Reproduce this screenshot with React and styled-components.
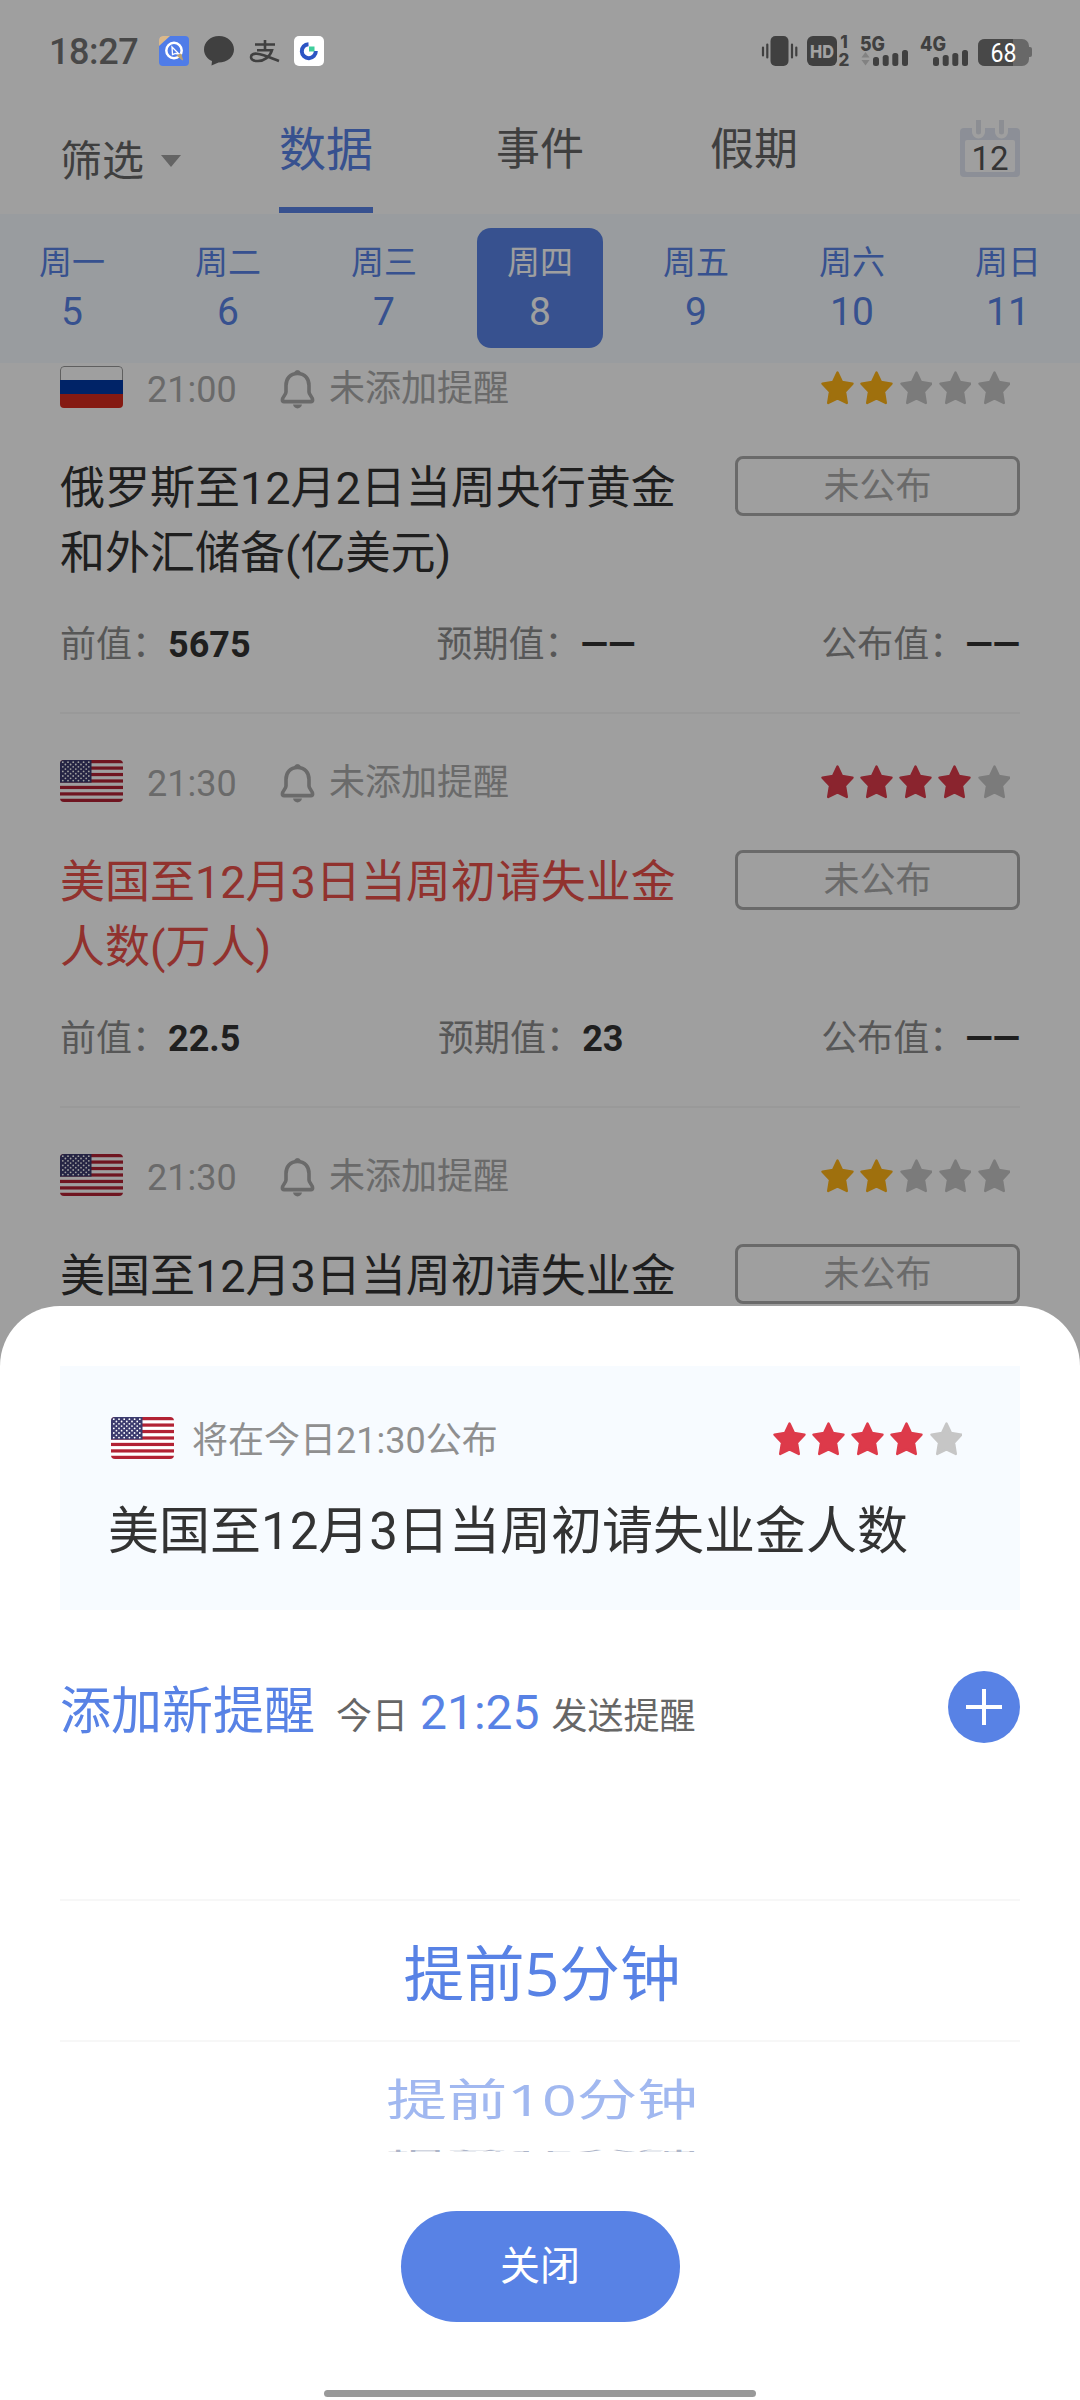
import styled, { createGlobalStyle } from 'styled-components'

const colors = {
  blue: '#5882e5',
  text: '#333',
  muted: '#aaa',
  label: '#8c8c8c',
  red: '#dd3a4a',
  gold: '#ffb416',
  star: '#c6c6c6',
}

const week = [
  { name: '周一', day: 5 },
  { name: '周二', day: 6 },
  { name: '周三', day: 7 },
  { name: '周四', day: 8, active: true },
  { name: '周五', day: 9 },
  { name: '周六', day: 10 },
  { name: '周日', day: 11 },
]

const events = [
  { id: 1, country: 'ru', time: '21:00', stars: 2, title: '俄罗斯至12月2日当周央行黄金和外汇储备(亿美元)', values: ['5675', '——', '——'] },
  { id: 2, country: 'us', time: '21:30', stars: 4, title: '美国至12月3日当周初请失业金人数(万人)', values: ['22.5', '23', '——'] },
  { id: 3, country: 'us', time: '21:30', stars: 2, title: '美国至12月3日当周初请失业金' },
]

const GlobalStyle = createGlobalStyle`
  * {
    box-sizing: border-box;
  }

  body {
    margin: 0;
    background: #fff;
    font-family: Roboto, 'Noto Sans CJK SC', sans-serif;
  }
`

const Screen = styled.div`
  position: relative;
  width: 1080px;
  height: 2400px;
  overflow: hidden;
  background: #fff;
  color: ${colors.text};
`

const StatusBar = styled.header`
  position: relative;
  z-index: 2;
  height: 100px;
  padding: 32px 48px 0 49px;
  display: flex;
  justify-content: space-between;
  color: #404040;

  svg {
    overflow: visible;
  }
`

const StatusGroup = styled.div`
  display: flex;
  height: 38px;
  align-items: center;
  gap: 15px;
`

const Clock = styled.span`
  width: 95px;
  padding-top: 2px;
  color: #484848;
  font-size: 36px;
  font-weight: 500;
  line-height: 38px;
  letter-spacing: -0.4px;
  white-space: nowrap;
`

const Tabs = styled.nav`
  height: 114px;
  display: flex;
  align-items: flex-start;
`

const Filter = styled.button`
  display: flex;
  align-items: center;
  gap: 17px;
  width: 279px;
  height: 122px;
  padding: 0 0 0 60px;
  border: 0;
  background: none;
  color: #666;
  font: inherit;
  font-size: 42px;
  line-height: 56px;
`

const FilterLabel = styled.span`
  margin-top: 1px;
`

const Caret = styled.span`
  border: 10px solid transparent;
  border-top: 12px solid #a0a0a0;
  border-bottom: 0;
`

const Tab = styled.div`
  height: 113px;
  margin-right: ${({ $gap }) => $gap}px;
  padding-top: 15px;
  border-bottom: 6px solid ${({ $active }) => ($active ? colors.blue : 'transparent')};
  color: ${({ $active }) => ($active ? colors.blue : '#666')};
  font-size: ${({ $active }) => ($active ? 47 : 44)}px;
  line-height: 70px;
`

const CalendarButton = styled.div`
  margin: 20px 0 0 auto;
  padding-right: 60px;
`

const WeekBar = styled.div`
  position: relative;
  height: 149px;
  padding: 14px 0;
  display: flex;
  justify-content: center;
  gap: 30px;
  background: #f5fbff;
`

const Day = styled.div`
  flex: none;
  width: 126px;
  height: 120px;
  padding-top: 10px;
  border-radius: 14px;
  text-align: center;
  color: ${({ $active }) => ($active ? '#fff' : colors.blue)};
  background: ${({ $active }) => ($active ? colors.blue : 'none')};
`

const DayName = styled.div`
  font-size: 33px;
  line-height: 50px;
`

const DayNumber = styled.div`
  font-size: 39px;
  line-height: 48px;
`

const EventList = styled.main`
  height: 953px;
  overflow: hidden;
`

const EventItem = styled.article`
  height: 394px;
  margin: 0 60px;
  padding-top: 46px;
  border-bottom: 2px solid #f6f6f6;

  &:first-child {
    margin-top: -43px;
  }
`

const EventMeta = styled.div`
  display: flex;
  align-items: center;
  height: 42px;
  color: ${colors.muted};
  font-size: 36px;
  line-height: 42px;
`

const EventTime = styled.span`
  width: 133px;
  margin-left: 24px;
  padding-top: 5px;
`

const Reminder = styled.span`
  display: flex;
  align-items: center;
  gap: 14px;
  padding-top: 4px;
`

const StarRow = styled.div`
  display: flex;
  gap: 6px;
  margin-left: auto;
  margin-right: ${({ $right }) => $right}px;
  padding-top: 2px;
`

const EventBody = styled.div`
  display: flex;
  justify-content: space-between;
  height: 132px;
  margin-top: 45px;
`

const EventTitle = styled.h3`
  width: 625px;
  margin: 3px 0 0;
  color: ${({ $hot }) => ($hot ? '#e8504a' : colors.text)};
  font-size: 45px;
  font-weight: 400;
  line-height: 65.3px;
`

const Pending = styled.div`
  width: 285px;
  height: 60px;
  margin-top: 3px;
  border: 3px solid ${colors.muted};
  border-radius: 8px;
  color: ${colors.muted};
  font-size: 36px;
  line-height: 57px;
  text-align: center;
`

const Values = styled.div`
  display: flex;
  justify-content: space-between;
  margin-top: 35px;
  color: ${colors.label};
  font-size: 36px;
  line-height: 50px;
  white-space: nowrap;

  b {
    color: ${colors.text};
    font-weight: 700;
  }
`

const Overlay = styled.div`
  position: absolute;
  inset: 0;
  background: rgba(0, 0, 0, 0.376);
`

const Sheet = styled.section`
  position: absolute;
  left: 0;
  right: 0;
  bottom: 0;
  height: 1094px;
  padding: 60px 60px 0;
  border-radius: 60px 60px 0 0;
  background: #fff;
`

const SheetCard = styled.div`
  height: 244px;
  padding: 51px 57px 0 51px;
  background: #f7fbff;
`

const CardMeta = styled.div`
  display: flex;
  align-items: center;
  height: 42px;
  color: #8f8f8f;
  font-size: 36px;
  line-height: 42px;

  span {
    margin-left: 18px;
    padding-top: 5px;
  }
`

const CardTitle = styled.h2`
  margin: 38px 0 0 -3px;
  font-size: 51px;
  font-weight: 400;
  line-height: 70px;
  white-space: nowrap;
`

const AddRow = styled.div`
  display: flex;
  align-items: center;
  height: 72px;
  margin-top: 61px;
  white-space: nowrap;
`

const AddText = styled.div`
  display: flex;
  align-items: baseline;
  padding-top: 15px;
  color: #666;
  font-size: 36px;
  line-height: 72px;

  strong {
    margin-right: 21px;
    color: ${colors.blue};
    font-size: 51px;
    font-weight: 400;
  }

  em {
    margin: 0 12px;
    color: ${colors.blue};
    font-size: 48px;
    font-style: normal;
  }
`

const AddButton = styled.button`
  width: 72px;
  height: 72px;
  margin-left: auto;
  padding: 18px;
  border: 0;
  border-radius: 50%;
  background: ${colors.blue};

  svg {
    display: block;
  }
`

const Wheel = styled.div`
  height: 253px;
  margin-top: 156px;
  padding-left: 4px;
  overflow: hidden;
  color: ${colors.blue};
  font-family: 'Noto Sans', 'Noto Sans CJK SC', sans-serif;
  font-size: 60.6px;
  text-align: center;
`

const WheelCurrent = styled.div`
  height: 143px;
  margin-left: -4px;
  padding: 2px 0 0 4px;
  border: solid #f7f7f7;
  border-width: 2px 0;
  line-height: 139px;
`

const WheelNext = styled.div`
  height: 108px;
  line-height: 108px;
  opacity: 0.56;
  transform: translateY(3px) scaleY(0.73);
`

const WheelEdge = styled.div`
  height: 60px;
  line-height: 60px;
  color: #6c7a9c;
  opacity: 0.55;
  transform: translateY(0.5px) scaleY(0.07);
  transform-origin: top;
`

const CloseButton = styled.button`
  display: block;
  width: 279px;
  height: 111px;
  margin: 59px auto 0;
  padding: 1px 0 0;
  border: 0;
  border-radius: 56px;
  background: ${colors.blue};
  color: #fff;
  font: inherit;
  font-size: 40px;
  line-height: 110px;
`

const HomeBar = styled.div`
  width: 432px;
  height: 7px;
  margin: 68px auto 0;
  border-radius: 4px;
  background: #999;
`

const FlagSvg = styled.svg`
  flex: none;
  display: block;
  border-radius: 4px;
`

function RussiaFlag() {
  return (
    <FlagSvg width="63" height="42" viewBox="0 0 63 42">
      <rect width="63" height="42" fill="#fff" />
      <path d="M.5 14V4Q.5 .5 4 .5H59Q62.5 .5 62.5 4V14" fill="none" stroke="#999" />
      <rect y="14" width="63" height="14" fill="#0039a6" />
      <rect y="28" width="63" height="14" fill="#d52b1e" />
    </FlagSvg>
  )
}

function UsaFlag() {
  const dots = []
  for (let row = 0; row < 9; row++) {
    for (let col = 0; col < (row % 2 ? 5 : 6); col++) {
      dots.push(<circle key={`${row}-${col}`} cx={2.8 + col * 5.2 + (row % 2 ? 2.6 : 0)} cy={2.2 + row * 2.3} r="0.9" />)
    }
  }
  return (
    <FlagSvg width="63" height="42" viewBox="0 0 63 42">
      <rect width="63" height="42" fill="#fff" />
      {[0, 1, 2, 3, 4, 5, 6].map((i) => (
        <rect key={i} y={i * 6.46} width="63" height="3.23" fill="#b22234" />
      ))}
      <rect width="31.5" height="22.6" fill="#3c3b6e" />
      <g fill="#fff">{dots}</g>
    </FlagSvg>
  )
}

function Flag({ country }) {
  return country === 'ru' ? <RussiaFlag /> : <UsaFlag />
}

function Bell() {
  return (
    <svg width="35" height="40" viewBox="0 0 35 40" fill="none" stroke={colors.muted} strokeWidth="3.6" strokeLinejoin="round">
      <path d="M17.5 4.5C10 4.5 6 9.8 6 16.5V23C6 26 2.4 27.6 2.4 31C2.4 32.4 3 32.6 4 32.6H31C32 32.6 32.6 32.4 32.6 31C32.6 27.6 29 26 29 23V16.5C29 9.8 25 4.5 17.5 4.5Z" />
      <path d="M14.5 4.5Q14.5 1.6 17.5 1.6T20.5 4.5Z" fill={colors.muted} strokeWidth="1" />
      <path d="M13 35.6H22Q21 39.4 17.5 39.4T13 35.6Z" fill={colors.muted} stroke="none" />
    </svg>
  )
}

function Stars({ count, right }) {
  const active = count > 3 ? colors.red : colors.gold
  return (
    <StarRow $right={right}>
      {[0, 1, 2, 3, 4].map((i) => (
        <svg key={i} width="33" height="34" viewBox="0 0 33 34">
          <path
            d="M16.5 1.5L21 11L31.5 12.6L24 20.6L25.8 32L16.5 27.4L7.2 32L9 20.6L1.5 12.6L12 11Z"
            transform={i < count ? undefined : 'translate(1 0)'}
            fill={i < count ? active : colors.star}
            stroke={i < count ? active : colors.star}
            strokeWidth="2.4"
            strokeLinejoin="round"
          />
        </svg>
      ))}
    </StarRow>
  )
}

function CalendarIcon() {
  return (
    <svg width="60" height="58" viewBox="0 0 60 58">
      <rect y="8" width="60" height="49" rx="4" fill="#e1e6f2" />
      <rect x="5" y="20" width="50" height="32" rx="2" fill="#fff" />
      <path d="M18.5 0V12M41.5 0V12" stroke="#fff" strokeWidth="13" strokeLinecap="round" />
      <path d="M18.5 0V12M41.5 0V12" stroke="#e1e4ec" strokeWidth="5" strokeLinecap="round" />
      <text x="30" y="49.5" fontSize="33" textAnchor="middle" fill="#555">12</text>
    </svg>
  )
}

function NotificationIcons() {
  return (
    <svg width="166" height="32" viewBox="0 0 166 32">
      {/* browser */}
      <rect x="0" y="1" width="30" height="30" rx="4" fill="#4f7ce8" />
      <path d="M0 11V5Q0 1 4 1H11Z" fill="#dbb98a" />
      <circle cx="15" cy="15.5" r="7.7" fill="none" stroke="#fff" strokeWidth="2.5" />
      <path d="M13 12L20 19L16.5 18.5L13.5 19.5Z" fill="#4f7ce8" stroke="#fff" strokeWidth="1.3" />
      <path d="M18 20.5L22 19L23.5 25Z" fill="#b9a173" stroke="#b9a173" />
      {/* message */}
      <path d="M60 1C51.5 1 45 7 45 14.5C45 20 48.5 24 53 26L52.5 30.5L59.5 27.5C68.5 27.5 75 21.5 75 14.5C75 7 68.5 1 60 1Z" fill="#404040" />
      {/* pay */}
      <g fill="none" stroke="#404040" strokeWidth="2.6">
        <path d="M96 9.5H116M106 5V15M98 15.2H113C111 22 105 26 99 26C94 26 92 24 92 22C92 19.5 95 18.3 98 18.7C105 19.5 112 23 120 26" />
      </g>
      {/* cloud */}
      <rect x="135" y="1" width="30" height="30" rx="5" fill="#fff" />
      <path d="M149.5 9.2A7 7 0 1 0 156.8 16" fill="none" stroke="#2d55c4" strokeWidth="4" />
      <rect x="150" y="11.5" width="5.5" height="5" fill="#3fce9c" />
    </svg>
  )
}

function Signal({ x }) {
  return (
    <g fill="#404040">
      <rect x={x} y="22" width="6" height="9" rx="2.5" />
      <rect x={x + 9.7} y="20" width="6" height="11" rx="2.5" />
      <rect x={x + 19.3} y="18" width="6" height="13" rx="2.5" />
      <rect x={x + 29} y="15" width="6" height="16" rx="2.5" />
    </g>
  )
}

function SystemIcons() {
  return (
    <svg width="271" height="32" viewBox="0 0 271 32" fill="#404040" fontFamily="Inter, sans-serif" fontWeight="800">
      <rect x="9.5" y="1" width="18" height="30" rx="5" />
      <path d="M2 12.5V20.5M6.3 9.5V22.5M31 9.5V22.5M35.3 12.5V20.5" stroke="#404040" strokeWidth="2.2" strokeLinecap="round" />
      <rect x="46" y="1" width="30" height="30" rx="6" />
      <text x="49" y="22.5" fontSize="18" textLength="24" lengthAdjust="spacingAndGlyphs" fill="#a2a2a2">HD</text>
      <text x="83" y="13" fontSize="17" textAnchor="middle">1</text>
      <text x="83" y="31" fontSize="17" textAnchor="middle">2</text>
      <text x="99" y="16" fontSize="20.5" textLength="25" lengthAdjust="spacingAndGlyphs">5G</text>
      <path d="M100.5 22.5L104.5 17L108.5 22.5ZM100.5 25L104.5 30.5L108.5 25Z" fill="#828282" />
      <Signal x={112} />
      <text x="159" y="16" fontSize="20.5" textLength="26" lengthAdjust="spacingAndGlyphs">4G</text>
      <Signal x={172} />
      <rect x="217" y="4" width="51" height="27" rx="7" fill="#686868" />
      <path d="M268 12H269Q271 12 271 14V20Q271 22 269 22H268Z" fill="#686868" />
      <path d="M224 4H252V31H224Q217 31 217 24V11Q217 4 224 4Z" fill="#484848" />
      <text x="229.5" y="26.5" fontFamily="Roboto" fontSize="25" fontWeight="400" fill="#fff" textLength="26" lengthAdjust="spacingAndGlyphs">68</text>
    </svg>
  )
}

function EventRow({ event }) {
  return (
    <EventItem>
      <EventMeta>
        <Flag country={event.country} />
        <EventTime>{event.time}</EventTime>
        <Reminder>
          <Bell />
          未添加提醒
        </Reminder>
        <Stars count={event.stars} right={10} />
      </EventMeta>
      <EventBody>
        <EventTitle $hot={event.stars > 3}>{event.title}</EventTitle>
        <Pending>未公布</Pending>
      </EventBody>
      {event.values && (
        <Values>
          {['前值：', '预期值：', '公布值：'].map((label, i) => (
            <span key={label}>{label}<b>{event.values[i]}</b></span>
          ))}
        </Values>
      )}
    </EventItem>
  )
}

function ReminderSheet() {
  return (
    <Sheet>
      <SheetCard>
        <CardMeta>
          <Flag country="us" />
          <span>将在今日21:30公布</span>
          <Stars count={4} right={1} />
        </CardMeta>
        <CardTitle>美国至12月3日当周初请失业金人数</CardTitle>
      </SheetCard>
      <AddRow>
        <AddText>
          <strong>添加新提醒</strong>
          今日<em>21:25</em>发送提醒
        </AddText>
        <AddButton aria-label="添加">
          <svg width="36" height="36" viewBox="0 0 36 36" stroke="#fff" strokeWidth="4">
            <path d="M18 0V36M0 18H36" />
          </svg>
        </AddButton>
      </AddRow>
      <Wheel>
        <WheelCurrent>提前5分钟</WheelCurrent>
        <WheelNext>提前10分钟</WheelNext>
        <WheelEdge>提前15分钟</WheelEdge>
      </Wheel>
      <CloseButton>关闭</CloseButton>
      <HomeBar />
    </Sheet>
  )
}

export default function App() {
  return (
    <>
      <GlobalStyle />
      <Screen lang="zh-CN">
        <StatusBar>
          <StatusGroup>
            <Clock>18:27</Clock>
            <NotificationIcons />
          </StatusGroup>
          <StatusGroup>
            <SystemIcons />
          </StatusGroup>
        </StatusBar>
        <Tabs>
          <Filter>
            <FilterLabel>筛选</FilterLabel>
            <Caret />
          </Filter>
          <Tab $active $gap={123}>数据</Tab>
          <Tab $gap={126}>事件</Tab>
          <Tab>假期</Tab>
          <CalendarButton>
            <CalendarIcon />
          </CalendarButton>
        </Tabs>
        <WeekBar>
          {week.map(({ name, day, active }) => (
            <Day key={day} $active={active}>
              <DayName>{name}</DayName>
              <DayNumber>{day}</DayNumber>
            </Day>
          ))}
        </WeekBar>
        <EventList>
          {events.map((event) => (
            <EventRow key={event.id} event={event} />
          ))}
        </EventList>
        <Overlay />
        <ReminderSheet />
      </Screen>
    </>
  )
}
